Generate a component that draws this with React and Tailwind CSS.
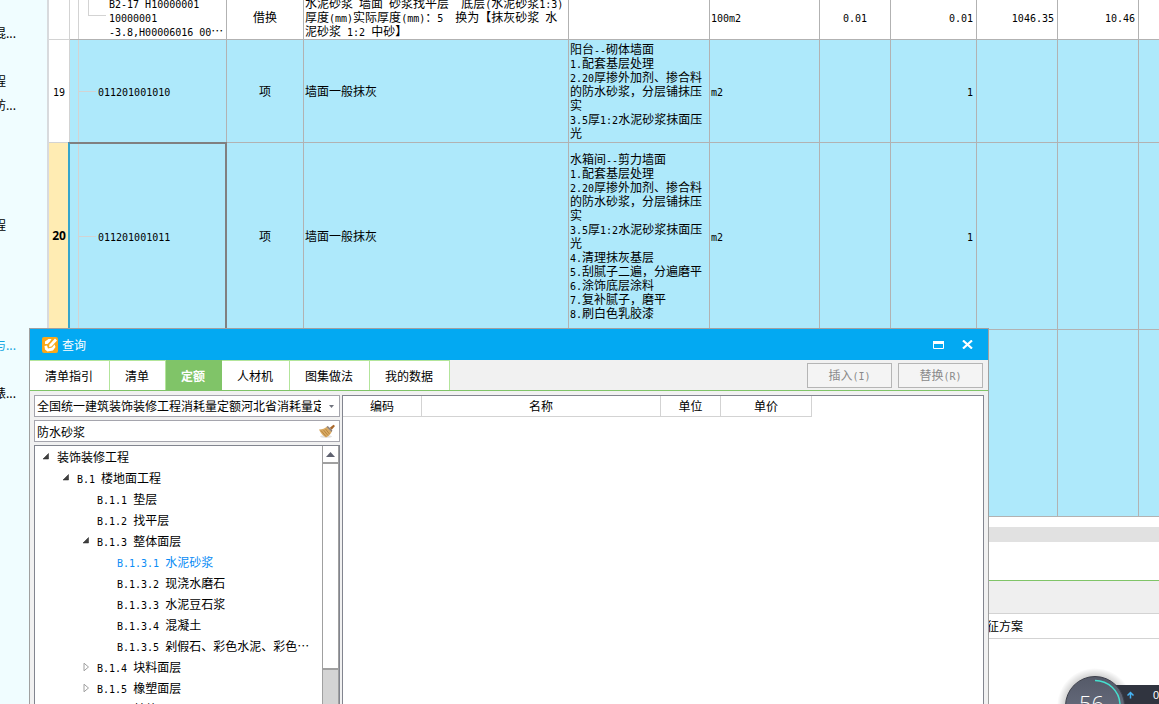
import { useState } from 'react'
import clsx from 'clsx'

const PROJECT_TREE = ['混...', '', '程', '防...', '', '', '', '', '程', '', '', '', '', '与...', '', '裱...']

const ROWS = [
  {
    no: '18', type: 'quota',
    code: ['B2-17 H10000001', '10000001', '-3.8,H00006016 00⋯'],
    unitType: '借换',
    name: ['水泥砂浆 墙面 砂浆找平层  底层(水泥砂浆1:3)', '厚度(mm)实际厚度(mm)：5  换为【抹灰砂浆 水', '泥砂浆 1:2 中砂】'],
    feature: [],
    unit: '100m2', content: '0.01', qty: '0.01', price: '1046.35', total: '10.46',
  },
  {
    no: '19', type: 'bill',
    code: ['011201001010'],
    unitType: '项',
    name: ['墙面一般抹灰'],
    feature: ['阳台--砌体墙面', '1.配套基层处理', '2.20厚掺外加剂、掺合料', '的防水砂浆，分层铺抹压', '实', '3.5厚1:2水泥砂浆抹面压', '光'],
    unit: 'm2', qty: '1',
  },
  {
    no: '20', type: 'bill',
    code: ['011201001011'],
    unitType: '项',
    name: ['墙面一般抹灰'],
    feature: ['水箱间--剪力墙面', '1.配套基层处理', '2.20厚掺外加剂、掺合料', '的防水砂浆，分层铺抹压', '实', '3.5厚1:2水泥砂浆抹面压', '光', '4.清理抹灰基层', '5.刮腻子二遍，分遍磨平', '6.涂饰底层涂料', '7.复补腻子，磨平', '8.刷白色乳胶漆'],
    unit: 'm2', qty: '1',
  },
  { no: '', type: 'bill', code: [], name: [], feature: [] },
]

const ROW_HEIGHTS = ['h-[45px]', 'h-[103px]', 'h-[187px]', 'h-[187px]']

const TABS = ['清单指引', '清单', '定额', '人材机', '图集做法', '我的数据']

const QUOTA_TREE = [
  { level: 0, label: '装饰装修工程', state: 'open' },
  { level: 1, label: 'B.1 楼地面工程', state: 'open' },
  { level: 2, label: 'B.1.1 垫层' },
  { level: 2, label: 'B.1.2 找平层' },
  { level: 2, label: 'B.1.3 整体面层', state: 'open' },
  { level: 3, label: 'B.1.3.1 水泥砂浆' },
  { level: 3, label: 'B.1.3.2 现浇水磨石' },
  { level: 3, label: 'B.1.3.3 水泥豆石浆' },
  { level: 3, label: 'B.1.3.4 混凝土' },
  { level: 3, label: 'B.1.3.5 剁假石、彩色水泥、彩色⋯' },
  { level: 2, label: 'B.1.4 块料面层', state: 'closed' },
  { level: 2, label: 'B.1.5 橡塑面层', state: 'closed' },
  { level: 2, label: 'B.1.6 其他面层', state: 'closed' },
]

const INDENT = ['pl-[6px]', 'pl-[26px]', 'pl-[46px]', 'pl-[66px]']

// latin runs are set in a half-width mono face, so that two letters fill one CJK cell
function Txt({ children }) {
  return String(children).split(/([\x20-\x7e]+)/).map((part, i) =>
    i % 2
      ? <span key={i} className="font-['DejaVu_Sans_Mono',monospace] text-[10px] leading-none whitespace-pre">{part}</span>
      : part
  )
}

function Lines({ items }) {
  return items.map(line => (
    <div key={line} className="whitespace-pre"><Txt>{line}</Txt></div>
  ))
}

function Cell({ className, children }) {
  return <td className={clsx('border-r border-b border-[#b2b2b2] overflow-hidden', className)}>{children}</td>
}

function BillTable() {
  return (
    <table className="-mt-[5px] w-full table-fixed border-separate border-spacing-0 text-left">
      <colgroup>
        <col className="w-[21px]" />
        <col className="w-[157px]" />
        <col className="w-[77px]" />
        <col className="w-[265px]" />
        <col className="w-[141px]" />
        <col className="w-[110px]" />
        <col className="w-[71px]" />
        <col className="w-[86px]" />
        <col className="w-[81px]" />
        <col className="w-[81px]" />
        <col />
      </colgroup>
      <tbody>
        {ROWS.map((r, i) => {
          const current = r.no === '20'
          return (
            <tr key={i} className={clsx(ROW_HEIGHTS[i], r.type === 'bill' ? 'bg-[#aee9fb]' : 'bg-white')}>
              <td className={clsx(
                'border-r border-b border-[#d3d3d3] text-center',
                current ? "bg-[#ffecb3] font-['Open_Sans',sans-serif] font-bold" : 'bg-white'
              )}>
                {current ? r.no : i > 0 && <Txt>{r.no}</Txt>}
              </td>
              <td className={clsx('relative border-r border-b border-[#b2b2b2]', r.type === 'quota' ? 'pl-[39px]' : 'pl-[28px]')}>
                <span className="absolute inset-y-0 left-[8px] w-px bg-[#d3d3d3]" />
                {r.type === 'quota'
                  ? <span className="absolute top-0 left-[18px] h-[21px] w-[18px] border-b border-l border-[#d3d3d3]" />
                  : <span className="absolute top-1/2 left-[8px] h-px w-[18px] bg-[#d3d3d3]" />}
                {current && (
                  <span className="absolute -top-px -right-px bottom-0 -left-[2px] border-t-2 border-r-2 border-l-2 border-[#808080] border-l-[#35a5cc]" />
                )}
                <Lines items={r.code} />
              </td>
              <Cell className="text-center">{r.unitType}</Cell>
              <Cell className="pl-px"><Lines items={r.name} /></Cell>
              <Cell className="pl-px"><Lines items={r.feature} /></Cell>
              <Cell className="pl-px"><Txt>{r.unit ?? ''}</Txt></Cell>
              <Cell className="text-center"><Txt>{r.content ?? ''}</Txt></Cell>
              <Cell className="pr-[3px] text-right"><Txt>{r.qty ?? ''}</Txt></Cell>
              <Cell className="pr-[3px] text-right"><Txt>{r.price ?? ''}</Txt></Cell>
              <Cell className="pr-[3px] text-right"><Txt>{r.total ?? ''}</Txt></Cell>
              <td className="border-b border-[#b2b2b2]" />
            </tr>
          )
        })}
      </tbody>
    </table>
  )
}

function LogoIcon() {
  return (
    <svg width="16" height="16" viewBox="0 0 16 16" aria-hidden="true">
      <rect width="16" height="16" rx="2" fill="#f9a81a" />
      <path d="M3 4.500 6.500 2 9.500 2 8 4.500 5.500 7 3 7z" fill="#fff" />
      <path d="M13 1.500 15 3.500 9.500 9.500 7 10 7.500 7.500z" fill="#fff" />
      <path d="M2.500 9 5 8.500 6 11.500 10 10.500 12.500 7.500 13.500 10 11 13.500 5.500 14.500 3 12.500z" fill="#fff" />
    </svg>
  )
}

function BroomIcon() {
  return (
    <svg width="17" height="14" viewBox="0 0 17 14" aria-hidden="true">
      <ellipse cx="7" cy="12.5" rx="6" ry="1.3" fill="#e2e2e2" />
      <path d="M10.5 4 14.5.7 16 2l-3.500 4z" fill="#a9682c" />
      <path d="M0 5.500C3.500 5.500 6 4.500 8 2.500l5 4.500C12 10 10 12 7 13.500 4 12 1.500 9 0 5.500z" fill="#d9a961" />
      <path d="M2 6.500 7 12.500M4.500 6 9 11.500M6.500 5 10.500 10" stroke="#a0702f" strokeWidth=".6" />
      <path d="M7.500 3 12.500 8 13.500 6.500 9 2z" fill="#a7a7ad" />
      <path d="M8 2.500 13 7.300" stroke="#77502c" strokeWidth=".7" />
    </svg>
  )
}

function Expander({ state }) {
  return (
    <svg width="10" height="10" viewBox="0 0 10 10" className="shrink-0" aria-hidden="true">
      {state === 'open' && <path d="M7.500 1.500V7H2z" fill="#404040" stroke="#222" strokeWidth=".5" />}
      {state === 'closed' && <path d="M3 1.200 7.500 5 3 8.800z" fill="#fff" stroke="#a0a0a0" />}
    </svg>
  )
}

function QuotaTree() {
  const [selected, setSelected] = useState('B.1.3.1 水泥砂浆')
  return (
    <div className="flex min-h-0 flex-1 overflow-hidden border border-b-0 border-[#82858f] bg-white">
      <ul className="min-w-0 flex-1">
        {QUOTA_TREE.map(n => (
          <li key={n.label}>
            <button
              onClick={() => setSelected(n.label)}
              className={clsx(
                'flex h-[21px] w-full items-center gap-[6px] text-left whitespace-pre',
                INDENT[n.level],
                selected === n.label && 'text-[#0a8cf5]'
              )}
            >
              <Expander state={n.state} />
              <span><Txt>{n.label}</Txt></span>
            </button>
          </li>
        ))}
      </ul>
      <div className="flex w-[17px] flex-col border-x border-[#a0a0a0] bg-[#d4d4d4]">
        <button aria-label="向上滚动" className="flex h-[18px] shrink-0 items-center justify-center border-b-2 border-[#a0a0a0] bg-white">
          <svg width="9" height="5" viewBox="0 0 9 5" aria-hidden="true"><path d="M4.500 0 9 5H0z" fill="#5f6270" /></svg>
        </button>
        <div className="h-[206px] shrink-0 border-b-2 border-[#a0a0a0] bg-white" />
      </div>
    </div>
  )
}

function QueryDialog() {
  const [tab, setTab] = useState('定额')
  const [keyword, setKeyword] = useState('防水砂浆')

  return (
    <section aria-label="查询" className="absolute top-[328px] right-[170px] bottom-0 left-[29px] flex flex-col border border-b-0 border-[#a0a0a0] bg-[#f1f1f1]">
      <header className="flex h-[31px] shrink-0 items-center bg-[#03a9f2] pr-[15px] pl-3 text-white">
        <LogoIcon />
        <h2 className="ml-1 flex-1">查询</h2>
        <button aria-label="最大化" className="mr-[18px]">
          <svg width="11" height="8" viewBox="0 0 11 8" aria-hidden="true"><path d="M.5 .5h10v7H.5z" fill="none" stroke="#fff" /><path d="M0 0h11v3H0z" fill="#fff" /></svg>
        </button>
        <button aria-label="关闭">
          <svg width="11" height="9" viewBox="0 0 11 9" aria-hidden="true"><path d="M1 .5 10 8.500M10 .5 1 8.500" stroke="#fff" strokeWidth="2.200" /></svg>
        </button>
      </header>

      <div className="flex h-[31px] shrink-0 items-stretch justify-between border-b border-[#80c468]">
        <div role="tablist" className="flex">
          {TABS.map(name => (
            <button
              key={name}
              role="tab"
              aria-selected={tab === name}
              onClick={() => setTab(name)}
              className={clsx(
                'border-t border-r pr-4 pl-[15px]',
                tab === name ? 'border-[#80c468] bg-[#80c468] font-bold text-white' : 'border-[#b3e59b] bg-white'
              )}
            >
              {name}
            </button>
          ))}
        </div>
        <div className="flex items-center gap-[6px] pr-[5px] text-[#8a8a8a]">
          <button className="h-[25px] w-[85px] border border-[#b5b5b5] bg-[#f4f4f4]"><Txt>插入(I)</Txt></button>
          <button className="h-[25px] w-[85px] border border-[#b5b5b5] bg-[#f4f4f4]"><Txt>替换(R)</Txt></button>
        </div>
      </div>

      <div className="flex min-h-0 flex-1 gap-[2px] px-1 pt-1">
        <div className="flex w-[306px] shrink-0 flex-col">
          <div className="relative mb-[3px]">
            <select aria-label="定额库" className="block h-[22px] w-full appearance-none border border-[#a5a5ad] bg-white pr-[18px] pl-[2px]">
              <option>全国统一建筑装饰装修工程消耗量定额河北省消耗量定额</option>
            </select>
            <svg width="5" height="3" viewBox="0 0 5 3" className="pointer-events-none absolute top-[10px] right-[6px]" aria-hidden="true">
              <path d="M0 0h5L2.500 3z" fill="#70737d" />
            </svg>
          </div>
          <div className="mb-[3px] flex h-[22px] items-center border border-[#a5a5ad] bg-white pr-[3px]">
            <input
              aria-label="关键字"
              value={keyword}
              onChange={e => setKeyword(e.target.value)}
              className="h-full min-w-0 flex-1 pl-[2px] outline-none"
            />
            <button aria-label="清空" onClick={() => setKeyword('')}><BroomIcon /></button>
          </div>
          <QuotaTree />
        </div>

        <div className="min-w-0 flex-1 border border-b-0 border-[#82858f] bg-white">
          <table className="table-fixed border-separate border-spacing-0">
            <thead>
              <tr className="h-[21px]">
                <th className="w-[79px] border-r border-b border-[#d3d3d3] font-normal">编码</th>
                <th className="w-[239px] border-r border-b border-[#d3d3d3] font-normal">名称</th>
                <th className="w-[60px] border-r border-b border-[#d3d3d3] font-normal">单位</th>
                <th className="w-[91px] border-r border-b border-[#d3d3d3] font-normal">单价</th>
              </tr>
            </thead>
          </table>
        </div>
      </div>
    </section>
  )
}

function SpeedBall() {
  return (
    <div className="absolute right-0 bottom-0 h-[38px] w-[104px] overflow-hidden">
      <svg width="104" height="38" viewBox="0 0 104 38" aria-hidden="true">
        <defs>
          <radialGradient id="halo">
            <stop offset=".8" stopColor="#000" stopOpacity=".16" />
            <stop offset="1" stopColor="#000" stopOpacity="0" />
          </radialGradient>
          <linearGradient id="ball" x1="0" y1="0" x2="0" y2="1">
            <stop offset="0" stopColor="#555a68" />
            <stop offset="1" stopColor="#70768a" />
          </linearGradient>
        </defs>
        <circle cx="40" cy="40" r="38" fill="url(#halo)" />
        <path d="M40 19h64v19H40z" fill="#30343f" />
        <circle cx="40" cy="40" r="29.500" fill="url(#ball)" stroke="#3d404b" />
        <path d="M40 14.500A25 25 0 0 1 65 38" fill="none" stroke="#45e0cf" strokeWidth="1.500" />
        <path d="M75.500 26.500v6M72.500 29.500l3-3 3 3" fill="none" stroke="#46b4f5" strokeWidth="1.500" />
      </svg>
      <span className="absolute top-[25px] left-[24px] font-['Open_Sans',sans-serif] text-[22px] leading-6 font-light text-white">56</span>
      <span className="absolute top-[22px] left-[98px] font-['Liberation_Sans',sans-serif] text-[11px] text-white">0</span>
    </div>
  )
}

export default function App() {
  return (
    <div lang="zh-CN" className="relative flex h-screen overflow-hidden bg-white font-['Noto_Sans_CJK_SC',sans-serif] text-[12px] leading-[14px] text-black">
      <nav className="w-[49px] shrink-0 overflow-hidden border-r-2 border-[#d8dadd] bg-[#f0fdff] pt-[21px]">
        <ul>
          {PROJECT_TREE.map((label, i) => (
            <li key={i} className={clsx('-ml-[6px] flex h-6 items-center', label === '与...' && 'text-[#10a5e0]')}>{label}</li>
          ))}
        </ul>
      </nav>

      <main className="flex min-w-0 flex-1 flex-col overflow-hidden">
        <BillTable />
        <div className="mt-[10px] h-[15px] shrink-0 bg-[#e1e1e1]" />
        <div className="mt-[38px] h-[34px] shrink-0 border-t border-b border-t-[#80c468] border-b-[#d3d3d3] bg-[#efefef]" />
        <div className="flex h-[25px] shrink-0 items-center justify-end border-b border-[#d3d3d3] pr-[136px]">征方案</div>
      </main>

      <QueryDialog />
      <SpeedBall />
    </div>
  )
}
